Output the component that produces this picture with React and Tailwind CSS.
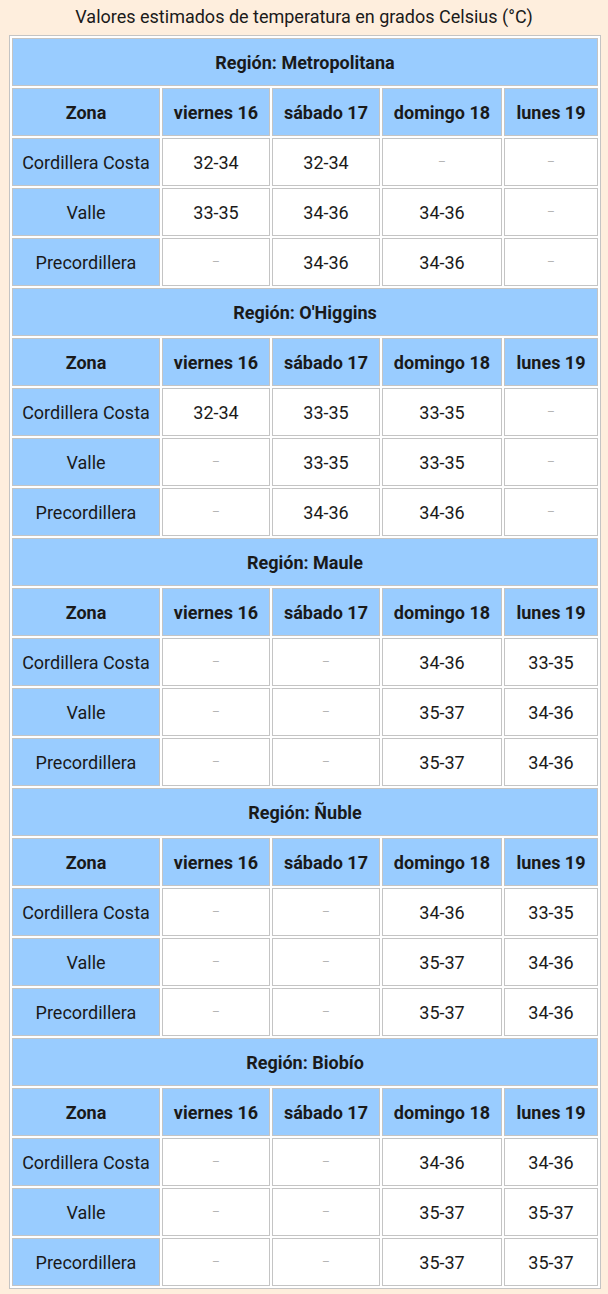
import React from 'react';

const dias = ['viernes 16', 'sábado 17', 'domingo 18', 'lunes 19'];

const regiones = [
  {
    nombre: 'Metropolitana',
    filas: [
      ['Cordillera Costa', '32-34', '32-34', null, null],
      ['Valle', '33-35', '34-36', '34-36', null],
      ['Precordillera', null, '34-36', '34-36', null],
    ],
  },
  {
    nombre: "O'Higgins",
    filas: [
      ['Cordillera Costa', '32-34', '33-35', '33-35', null],
      ['Valle', null, '33-35', '33-35', null],
      ['Precordillera', null, '34-36', '34-36', null],
    ],
  },
  {
    nombre: 'Maule',
    filas: [
      ['Cordillera Costa', null, null, '34-36', '33-35'],
      ['Valle', null, null, '35-37', '34-36'],
      ['Precordillera', null, null, '35-37', '34-36'],
    ],
  },
  {
    nombre: 'Ñuble',
    filas: [
      ['Cordillera Costa', null, null, '34-36', '33-35'],
      ['Valle', null, null, '35-37', '34-36'],
      ['Precordillera', null, null, '35-37', '34-36'],
    ],
  },
  {
    nombre: 'Biobío',
    filas: [
      ['Cordillera Costa', null, null, '34-36', '34-36'],
      ['Valle', null, null, '35-37', '35-37'],
      ['Precordillera', null, null, '35-37', '35-37'],
    ],
  },
];

const celda = 'h-[48px] flex items-center justify-center border border-[#c4c4c4] text-[18px]';

export default function App() {
  return (
    <div className="min-h-screen bg-[#feeedd] text-[#1a1a1a]" style={{ fontFamily: 'Roboto, "Noto Sans", sans-serif' }}>
      <p className="h-[35px] pb-[2px] flex items-center justify-center text-[18px]">
        Valores estimados de temperatura en grados Celsius (°C)
      </p>
      <div className="ml-[9px] w-[592px] bg-white border border-[#c4c4c4] p-[2px] grid grid-cols-[148px_108px_108px_120px_94px] gap-[2px]">
        {regiones.map((r) => (
          <React.Fragment key={r.nombre}>
            <div className={`${celda} col-span-5 bg-[#99ccff] font-bold`}>Región: {r.nombre}</div>
            <div className={`${celda} bg-[#99ccff] font-bold`}>Zona</div>
            {dias.map((d) => (
              <div key={d} className={`${celda} bg-[#99ccff] font-bold`}>{d}</div>
            ))}
            {r.filas.map((f) => (
              <React.Fragment key={f[0]}>
                <div className={`${celda} bg-[#99ccff]`}>{f[0]}</div>
                {f.slice(1).map((v, i) => (
                  <div key={i} className={`${celda} bg-white`}>
                    {v ? v : <span className="text-[12px] text-[#b5b5b5]">–</span>}
                  </div>
                ))}
              </React.Fragment>
            ))}
          </React.Fragment>
        ))}
      </div>
    </div>
  );
}
